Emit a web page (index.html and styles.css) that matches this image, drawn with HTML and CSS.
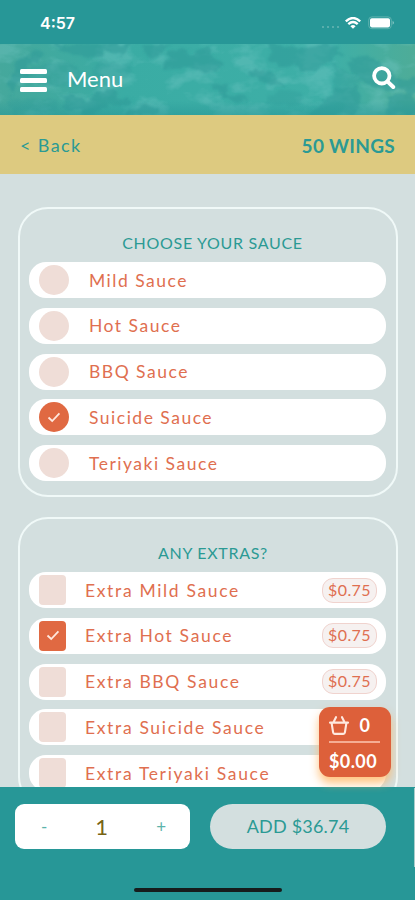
FILE: index.html
```
<!DOCTYPE html>
<html lang="en">
<head>
    <meta charset="utf-8">
    <meta name="viewport" content="width=device-width, initial-scale=1">
    <title>Menu - 50 Wings</title>
    <link rel="stylesheet" href="styles.css">
</head>
<body>
    <div class="status-bar">
        <span class="time">4:57</span>
        <div class="status-icons">
            <div class="dots"><i></i><i></i><i></i><i></i></div>
            <svg class="wifi" viewBox="0 0 16 12" width="16" height="12" fill="none" stroke="#fff" stroke-width="2.4">
                <path d="M.8 4.3Q8-2.2 15.2 4.3"/>
                <path d="M3.3 7.2Q8 3 12.7 7.2"/>
                <path d="M5.4 9.2Q8 7 10.6 9.2L8 11.8Z" fill="#fff" stroke="none"/>
            </svg>
            <svg class="battery" viewBox="0 0 27 14" width="27" height="14">
                <rect x=".7" y=".9" width="22.6" height="11.8" rx="3.2" fill="none" stroke="#5fb2af"/>
                <rect x="2" y="2.2" width="20" height="9.2" rx="1.8" fill="#fff"/>
                <path d="M24.6 4.8q2.6 2 0 4z" fill="#8fcac7"/>
            </svg>
        </div>
    </div>

    <header class="header">
        <svg class="texture" viewBox="0 0 415 71" preserveAspectRatio="none">
            <defs>
                <linearGradient id="base" x1="0" x2="1" y1="0" y2="0">
                    <stop offset="0" stop-color="#45a89c"/>
                    <stop offset=".3" stop-color="#3aaca4"/>
                    <stop offset=".8" stop-color="#3eafa7"/>
                    <stop offset="1" stop-color="#4eac98"/>
                </linearGradient>
                <linearGradient id="edge" x1="0" x2="0" y1="0" y2="1">
                    <stop offset=".8" stop-color="#279797" stop-opacity="0"/>
                    <stop offset="1" stop-color="#279797" stop-opacity=".55"/>
                </linearGradient>
                <filter id="rough" x="-5%" y="-20%" width="110%" height="140%">
                    <feTurbulence type="fractalNoise" baseFrequency=".05 .08" numOctaves="4" seed="7" result="n"/>
                    <feDisplacementMap in="SourceGraphic" in2="n" scale="20" xChannelSelector="R" yChannelSelector="G"/>
                    <feGaussianBlur stdDeviation="1.2"/>
                </filter>
                <filter id="mottle" x="0" y="0" width="100%" height="100%">
                    <feTurbulence type="fractalNoise" baseFrequency=".03 .05" numOctaves="4" seed="4"/>
                    <feColorMatrix values="0 0 0 0 .19  0 0 0 0 .59  0 0 0 0 .58  4 0 0 0 -1.8"/>
                </filter>
            </defs>
            <rect width="415" height="71" fill="url(#base)"/>
            <rect width="415" height="71" filter="url(#mottle)" opacity=".35"/>
            <g filter="url(#rough)" fill="#2f9a98" opacity=".55">
                <path d="M15 22q14-20 32-10q-14 2-20 14q-8 8-12 26q-8-10 0-30z"/>
                <path d="M50 0h86q-16 18-42 12q-30-2-44-12z"/>
                <path d="M142 2h30q-2 8-12 9q-12 0-18-9z"/>
                <path d="M164 18q20-14 46-12q8 12 14 16q-16 10-26 6q-12-4-34-2z"/>
                <path d="M268 2q20-2 28 6q20-10 42-3q4 12-8 16q-24 8-42 2q-18-2-20-21z"/>
                <path d="M246 25q18-2 38 17q-18 2-28-8q-8 0-10-9z"/>
                <path d="M208 40q20 4 40 16q-16 2-22-6q-14 2-18-10z"/>
                <path d="M316 71q4-24 38-28q14 12 2 20l-4 8z"/>
                <path d="M60 52q16 8 38-6q12 2 30 10q-20 16-46 10q-16 6-22-14z"/>
                <path d="M345 14q26-6 40 8q12 14 30 14v12q-30-4-46-8q-18-10-24-26z"/>
                <path d="M388 53l27-8v26h-34q2-10 7-18zM128 64l26-3v10h-28z"/>
            </g>
            <g filter="url(#rough)" fill="#2f9a98" opacity=".3">
                <path d="M10 55q26-12 48 8l-12 8h-36zM26 26q34-16 60 6q-10 14-24 10q-20 8-36-16z"/>
                <path d="M92 20q24-6 40 6l-14 16q-22-2-26-22z"/>
                <path d="M270 50q22-10 36 2l-8 8h-30zM330 24q24 0 34 14l-20 8q-14-6-14-22z"/>
            </g>
            <rect width="415" height="71" fill="url(#edge)"/>
        </svg>
        <div class="header-content">
            <div class="burger"><span></span><span></span><span></span></div>
            <h1 class="title">Menu</h1>
            <svg class="search" viewBox="0 0 24 24" width="24" height="24" fill="none" stroke="#fff" stroke-width="3.8" stroke-linecap="round">
                <circle cx="9.8" cy="9.8" r="7.7"/>
                <path d="M15.6 15.6l5.6 5.4" stroke-width="4"/>
            </svg>
        </div>
    </header>

    <nav class="sub-header">
        <a class="back">&lt; Back</a>
        <span class="item-name">50 WINGS</span>
    </nav>

    <main class="content">
        <section class="card">
            <h2 class="card-title sauce-title">CHOOSE YOUR SAUCE</h2>
            <div class="options radios">
                <div class="option"><span class="radio"></span><span class="label">Mild Sauce</span></div>
                <div class="option"><span class="radio"></span><span class="label">Hot Sauce</span></div>
                <div class="option"><span class="radio"></span><span class="label">BBQ Sauce</span></div>
                <div class="option">
                    <span class="radio checked"><svg viewBox="0 0 14 11" width="14" height="11"><path d="M1.5 5.5L5.2 9L12.4 1.4"/></svg></span>
                    <span class="label">Suicide Sauce</span>
                </div>
                <div class="option"><span class="radio"></span><span class="label">Teriyaki Sauce</span></div>
            </div>
        </section>

        <section class="card">
            <h2 class="card-title extras-title">ANY EXTRAS?</h2>
            <div class="options extras">
                <div class="option"><span class="checkbox"></span><span class="label">Extra Mild Sauce</span><span class="price">$0.75</span></div>
                <div class="option">
                    <span class="checkbox checked"><svg viewBox="0 0 14 11" width="14" height="11"><path d="M1.5 5.5L5.2 9L12.4 1.4"/></svg></span>
                    <span class="label">Extra Hot Sauce</span><span class="price">$0.75</span>
                </div>
                <div class="option"><span class="checkbox"></span><span class="label">Extra BBQ Sauce</span><span class="price">$0.75</span></div>
                <div class="option"><span class="checkbox"></span><span class="label">Extra Suicide Sauce</span></div>
                <div class="option"><span class="checkbox"></span><span class="label">Extra Teriyaki Sauce</span></div>
            </div>
        </section>
    </main>

    <footer class="footer">
        <div class="actions">
            <div class="quantity">
                <span class="step">-</span>
                <span class="count">1</span>
                <span class="step">+</span>
            </div>
            <div class="add">ADD $36.74</div>
        </div>
        <div class="home-indicator"></div>
    </footer>

    <div class="cart">
        <div class="cart-top">
            <svg viewBox="0 0 20 19" width="20" height="19" fill="none" stroke="#ffe9df" stroke-width="2.1" stroke-linecap="round" stroke-linejoin="round">
                <path d="M1 6.6h18M2.6 7l1.5 9.4q.2 1.5 1.6 1.5h8.6q1.4 0 1.6-1.5L17.4 7M4.6 6L7 1.2M15.4 6L13 1.2"/>
            </svg>
            <span class="cart-count">0</span>
        </div>
        <div class="cart-total">$0.00</div>
    </div>
</body>
</html>
```
FILE: styles.css
```
* {
    box-sizing: border-box;
}

body {
    position: relative;
    display: flex;
    flex-direction: column;
    width: 415px;
    height: 900px;
    margin: 0;
    overflow: hidden;
    background-color: #d3dfdf;
    color: #2b9a94;
    font-family: Lato, "Open Sans", sans-serif;
}

.status-bar {
    display: flex;
    justify-content: space-between;
    flex: none;
    height: 44px;
    padding: 13px 20px 0 40px;
    background-color: #279797;
    color: #fff;
}

.time {
    font-family: Inter, sans-serif;
    font-size: 16px;
    font-weight: 600;
    line-height: 20px;
}

.status-icons {
    display: flex;
    align-items: center;
    height: 20px;
}

.dots {
    display: flex;
    gap: 3px;
    margin: 7px 6px 0 0;
}

.dots i {
    width: 2px;
    height: 2px;
    background-color: #58aeac;
}

.wifi {
    margin-right: 7px;
}

.header {
    display: grid;
    flex: none;
    height: 71px;
}

.texture,
.header-content {
    grid-area: 1 / 1;
    width: 100%;
    height: 71px;
}

.header-content {
    z-index: 1;
    display: flex;
    align-items: center;
    padding: 0 19px 0 20px;
}

.burger {
    display: flex;
    flex-direction: column;
    gap: 4px;
    margin-top: 2px;
}

.burger span {
    width: 27px;
    height: 5px;
    border-radius: 1.5px;
    background-color: #fff;
}

.title {
    flex: 1;
    margin: -2px 0 0 20px;
    color: #fff;
    font-size: 22px;
    font-weight: 400;
}

.search {
    margin-top: -3px;
}

.sub-header {
    display: flex;
    align-items: center;
    justify-content: space-between;
    flex: none;
    height: 59px;
    padding: 1px 20px 0 20px;
    background-color: #ddca80;
}

.back {
    font-size: 18px;
    letter-spacing: 1.4px;
}

.item-name {
    font-size: 19px;
    font-weight: 700;
    letter-spacing: 0.3px;
}

.content {
    display: flex;
    flex: 1;
    flex-direction: column;
    gap: 20px;
    min-height: 0;
    padding: 33px 17px 0 18px;
    overflow: hidden;
}

.card {
    flex: none;
    height: 290px;
    padding: 0 9px;
    border: 2px solid #f0f9f8;
    border-radius: 30px;
}

.card-title {
    margin: 24px 0 9px;
    font-size: 16px;
    font-weight: 400;
    line-height: 20px;
    letter-spacing: 0.7px;
    text-align: center;
}

.sauce-title {
    padding-left: 9px;
}

.extras-title {
    padding-left: 10px;
}

.options {
    display: flex;
    flex-direction: column;
    gap: 9.8px;
}

.option {
    display: flex;
    align-items: center;
    width: 357px;
    height: 36px;
    padding: 0 9px 0 10px;
    border-radius: 17px;
    background-color: #fff;
    color: #df6f50;
}

.radio,
.checkbox {
    display: flex;
    align-items: center;
    justify-content: center;
    width: 30px;
    height: 30px;
    border-radius: 50%;
    background-color: #efddd7;
}

.checkbox {
    width: 27px;
    border-radius: 4px;
}

.checked {
    background-color: #e06942;
}

.checked path {
    fill: none;
    stroke: #ffe9df;
    stroke-width: 1.8;
}

.label {
    flex: 1;
    margin-left: 20px;
    font-size: 17.5px;
    letter-spacing: 1.5px;
    white-space: nowrap;
}

.extras .label {
    margin-left: 19px;
    letter-spacing: 1.65px;
}

.price {
    height: 25px;
    width: 55px;
    border: 1px solid #f0d3ce;
    border-radius: 11px;
    background-color: #f6f1f0;
    font-size: 16px;
    letter-spacing: 0.4px;
    line-height: 22px;
    text-align: center;
}

.footer {
    flex: none;
    height: 113px;
    padding-top: 1px;
    background-color: #279797;
}

.actions {
    display: flex;
    gap: 20px;
    height: 79px;
    padding: 16px 0 0 15px;
    border-right: 1px solid #a9cdcb;
}

.quantity {
    display: flex;
    align-items: center;
    justify-content: space-between;
    width: 175px;
    height: 45px;
    padding: 0 24px 0 26px;
    border-radius: 9px;
    background-color: #fff;
}

.step {
    color: #5cb3ab;
    font-size: 17px;
}

.count {
    color: #776414;
    font-size: 22px;
}

.add {
    width: 176px;
    height: 45px;
    border-radius: 23px;
    background-color: #d3dfdf;
    font-size: 18px;
    letter-spacing: 0.2px;
    line-height: 45px;
    text-align: center;
}

.home-indicator {
    width: 148px;
    height: 4px;
    margin: 21px 0 0 134px;
    border-radius: 2px;
    background-color: #161c1c;
}

/* floats over the list and the footer */
.cart {
    position: absolute;
    top: 707px;
    left: 319px;
    width: 72px;
    height: 70px;
    padding: 9px 11px 0 10px;
    border-radius: 11px;
    background-color: #dd603a;
    box-shadow: 0 6px 10px rgba(255, 184, 104, 0.85);
    color: #fff;
}

.cart-top {
    display: flex;
    align-items: center;
    justify-content: space-between;
    height: 27px;
    padding: 0 10px 7px 0;
    border-bottom: 2px solid #f5ad94;
}

.cart-count {
    font-size: 18px;
    font-weight: 700;
}

.cart-total {
    margin-top: 7px;
    font-size: 18px;
    font-weight: 700;
    letter-spacing: 0.4px;
    line-height: 22px;
}
```
